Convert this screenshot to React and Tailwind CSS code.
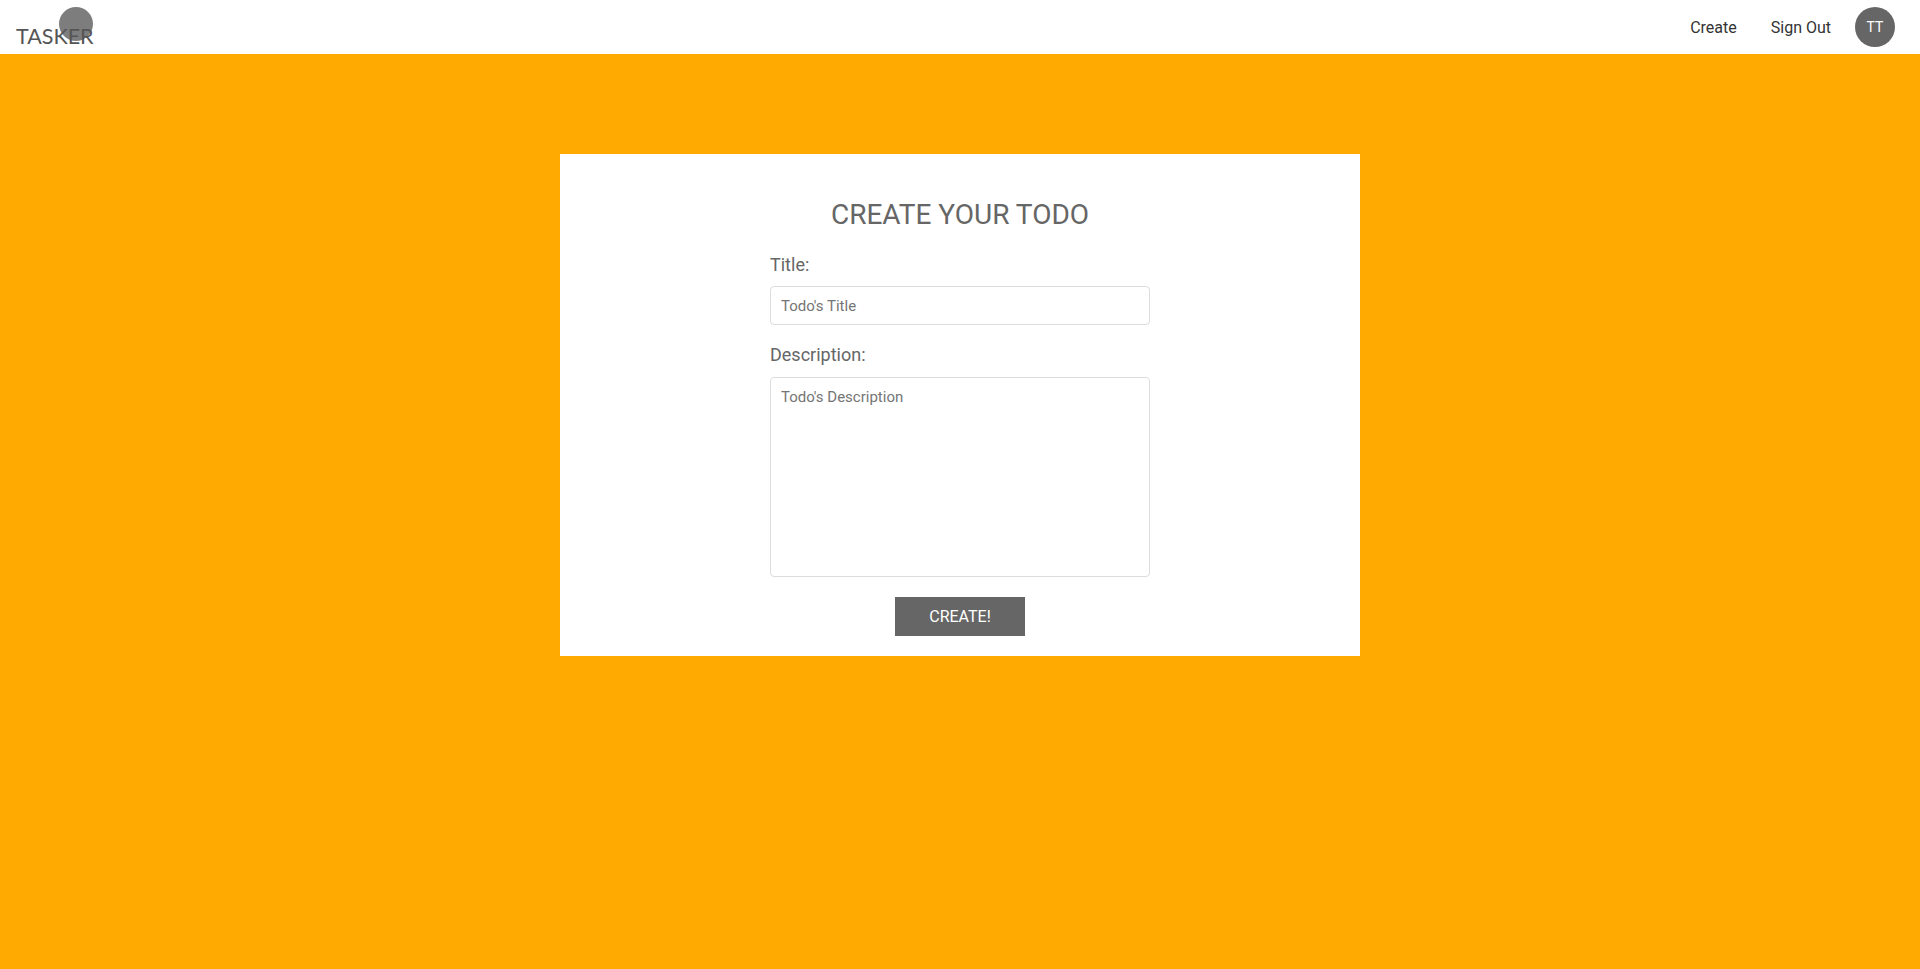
export default function App() {
  return (
    <div className="min-h-[969px] bg-[#ffaa00] font-['Roboto',sans-serif] text-[#666666]">
      <nav className="flex h-[54px] items-center justify-between bg-white pl-4 pr-[25px]">
        <a className="relative block h-[54px] w-[77px]">
          <span className="absolute left-[43px] top-[7px] h-[34px] w-[34px] rounded-full bg-[#666666] opacity-85" />
          <span className="absolute left-0 top-[24px] font-['Lato',sans-serif] text-[21.5px] font-normal leading-[24px] text-[#555555]">TASKER</span>
        </a>
        <div className="flex items-center text-[16px] text-[#333333]">
          <a className="mr-[34px] pt-[1px]">Create</a>
          <a className="mr-[24px] pt-[1px]">Sign Out</a>
          <span className="flex h-10 w-10 items-center justify-center rounded-full bg-[#666666] text-[14px] text-white">TT</span>
        </div>
      </nav>
      <main className="flex justify-center pt-[100px]">
        <form className="flex h-[502px] w-[800px] flex-col items-center bg-white pt-[44px]">
          <h1 className="text-[28px] font-normal leading-[34px]">CREATE YOUR TODO</h1>
          <div className="mt-[21px] flex w-[380px] flex-col">
            <label className="text-[18px] leading-[24px]">Title:</label>
            <input placeholder="Todo's Title" className="mt-[9px] h-[39px] rounded-[4px] border border-[#dddddd] px-[10px] text-[15px] outline-none placeholder:text-[#757575]" />
            <label className="mt-[18px] text-[18px] leading-[24px]">Description:</label>
            <textarea placeholder="Todo's Description" className="mt-[10px] h-[200px] resize-none rounded-[4px] border border-[#dddddd] p-[10px] text-[15px] leading-[18px] outline-none placeholder:text-[#757575]" />
          </div>
          <button type="button" className="mt-[20px] h-[39px] w-[130px] bg-[#666666] text-[16px] font-normal text-white">CREATE!</button>
        </form>
      </main>
    </div>
  );
}
